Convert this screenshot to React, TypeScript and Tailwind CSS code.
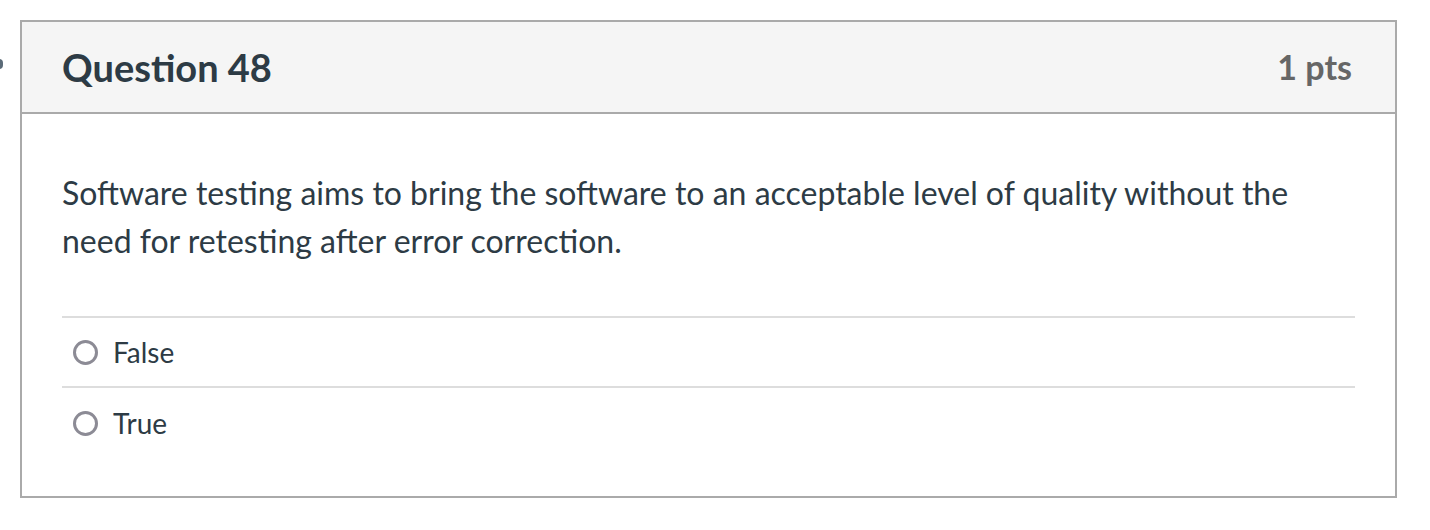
import React from 'react'

const OPTIONS = ['False', 'True']

export default function App() {
  return (
    <div className="relative w-[1430px] h-[530px] bg-white font-['Lato','Liberation_Sans',sans-serif] overflow-hidden">
      <div className="absolute left-[-5px] top-[59px] w-[8px] h-[10px] rounded-full bg-[#5b6b78]" />
      <div className="ml-5 pt-5">
        <div className="w-[1377px] border-2 border-[#aaaaaa]">
          <div className="h-[92px] bg-[#f5f5f5] border-b-2 border-[#aaaaaa] flex items-center justify-between pl-10 pr-[43px]">
            <h2 className="text-[38px] font-bold text-[#2d3b45] leading-none">Question 48</h2>
            <div className="text-[34px] font-bold text-[#666666] leading-none">1 pts</div>
          </div>
          <div className="px-10 pt-[55px] pb-[38px]">
            <p className="text-[32px] leading-[48px] text-[#2d3b45]">
              Software testing aims to bring the software to an acceptable level of quality without the need for
              retesting after error correction.
            </p>
            <div className="mt-[51px]">
              {OPTIONS.map((opt, i) => (
                <div
                  key={opt}
                  className={
                    'flex items-center gap-[15px] pl-[11px] ' +
                    (i === 0 ? 'h-[72px] border-t-2 border-b-2 border-[#dddddd]' : 'h-[70px]')
                  }
                >
                  <span className="w-[25px] h-[25px] rounded-full border-[3px] border-[#8c8b95] bg-white" />
                  <span className="text-[28px] text-[#2d3b45]">{opt}</span>
                </div>
              ))}
            </div>
          </div>
        </div>
      </div>
    </div>
  )
}
